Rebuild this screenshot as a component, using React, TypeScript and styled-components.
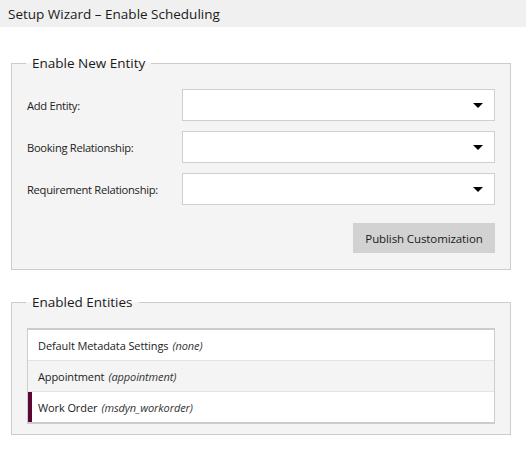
import React from "react";
import styled, { createGlobalStyle } from "styled-components";

const GlobalStyle = createGlobalStyle`
  html, body {
    margin: 0;
    padding: 0;
    background: #ffffff;
  }
  body {
    font-family: "Open Sans", "Noto Sans", sans-serif;
    color: #222222;
  }
  * {
    box-sizing: border-box;
  }
`;

const Page = styled.div`
  width: 526px;
  height: 452px;
  background: #ffffff;
`;

const Header = styled.div`
  height: 27px;
  background: #f0f0f0;
  padding-left: 8px;

  display: flex;
  align-items: center;

  font-size: 13.5px;
  color: #1a1a1a;
`;

const Content = styled.div`
  padding: 26px 15px 0 11px;

  display: flex;
  flex-direction: column;
  gap: 22px;
`;

const Group = styled.fieldset<{ $bottom: number }>`
  margin: 0;
  padding: 16px 15px ${(p) => p.$bottom}px 15px;

  background: #f4f4f4;
  border: 1px solid #cccccc;
  min-width: 0;
`;

const GroupTitle = styled.legend`
  margin-left: -1px;
  padding: 0 6px;

  font-size: 13.5px;
  line-height: 20px;
  color: #1a1a1a;
`;

const FormGrid = styled.div`
  display: grid;
  grid-template-columns: 155px 1fr;
  row-gap: 10px;
  align-items: center;
`;

const FieldLabel = styled.label`
  font-size: 11.2px;
  letter-spacing: -0.3px;
  color: #222222;
`;

const SelectBox = styled.div`
  height: 32px;
  background: #ffffff;
  border: 1px solid #cfcfcf;

  display: flex;
  align-items: center;
  justify-content: flex-end;
  padding-right: 11px;
`;

const Caret = styled.span`
  width: 0;
  height: 0;
  border-left: 5px solid transparent;
  border-right: 5px solid transparent;
  border-top: 5px solid #000000;
`;

const Actions = styled.div`
  margin-top: 18px;

  display: flex;
  justify-content: flex-end;
`;

const Button = styled.button`
  width: 142px;
  height: 30px;

  background: #d2d2d2;
  border: none;

  font-family: inherit;
  font-size: 11.5px;
  letter-spacing: -0.1px;
  color: #1a1a1a;
`;

const EntityList = styled.div`
  background: #ffffff;
  border: 1px solid #cccccc;
  border-top-width: 2px;
  border-bottom-width: 2px;
`;

const EntityRow = styled.div<{ $alt?: boolean; $selected?: boolean }>`
  height: 31px;
  padding-left: 10px;

  display: flex;
  align-items: center;

  background: ${(p) => (p.$alt ? "#f4f4f4" : "#ffffff")};
  border-top: 1px solid #e4e4e4;
  box-shadow: ${(p) => (p.$selected ? "inset 4px 0 0 #5c0632" : "none")};

  font-size: 11px;
  letter-spacing: -0.1px;
  color: #222222;

  &:first-child {
    border-top: none;
    height: 30px;
  }
`;

const LogicalName = styled.i`
  margin-left: 4px;
  color: #333333;
`;

const fields = ["Add Entity:", "Booking Relationship:", "Requirement Relationship:"];

const entities = [
  { name: "Default Metadata Settings", logical: "(none)" },
  { name: "Appointment", logical: "(appointment)" },
  { name: "Work Order", logical: "(msdyn_workorder)" },
];

export default function App() {
  return (
    <Page>
      <GlobalStyle />
      <Header>Setup Wizard – Enable Scheduling</Header>
      <Content>
        <Group $bottom={16}>
          <GroupTitle>Enable New Entity</GroupTitle>
          <FormGrid>
            {fields.map((f) => (
              <React.Fragment key={f}>
                <FieldLabel>{f}</FieldLabel>
                <SelectBox>
                  <Caret />
                </SelectBox>
              </React.Fragment>
            ))}
          </FormGrid>
          <Actions>
            <Button>Publish Customization</Button>
          </Actions>
        </Group>
        <Group $bottom={10}>
          <GroupTitle>Enabled Entities</GroupTitle>
          <EntityList>
            {entities.map((e, i) => (
              <EntityRow key={e.name} $alt={i === 1} $selected={i === 2}>
                {e.name}
                <LogicalName>{e.logical}</LogicalName>
              </EntityRow>
            ))}
          </EntityList>
        </Group>
      </Content>
    </Page>
  );
}
